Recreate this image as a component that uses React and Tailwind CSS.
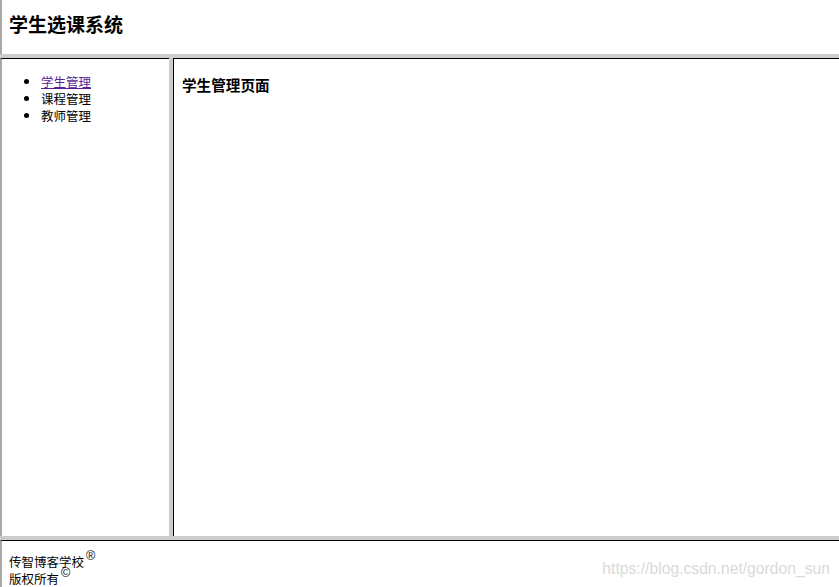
export default function App() {
  const menu = [
    { label: "学生管理", active: true },
    { label: "课程管理" },
    { label: "教师管理" },
  ];

  return (
    <div className="relative w-[839px] h-[587px] overflow-hidden bg-white flex flex-col font-['Noto_Sans_CJK_SC','Noto_Sans',sans-serif] text-black">
      {/* top frame */}
      <div className="h-[54px] border-l-2 border-[#a8a8a8] pl-[7px] pt-[12px]">
        <h3 className="text-[19px] leading-[24px] font-bold">学生选课系统</h3>
      </div>
      <div className="h-[4px] bg-[#cdcdcd]" />

      {/* middle frames */}
      <div className="flex h-[480px]">
        <div className="w-[169px] border-l-2 border-t border-[#a8a8a8] border-t-black pt-[14px]">
          <ul className="flex flex-col">
            {menu.map((item) => (
              <li key={item.label} className="flex items-center h-[17px] text-[12.5px] leading-[17px]">
                <span className="ml-[22px] w-[5px] h-[5px] rounded-full bg-black" />
                <span className="ml-[12px]">
                  {item.active ? (
                    <a href="#" className="text-[#5a1e96] underline">{item.label}</a>
                  ) : (
                    item.label
                  )}
                </span>
              </li>
            ))}
          </ul>
        </div>
        <div className="w-[4px] bg-[#cdcdcd]" />
        <div className="flex-1 border-l border-t border-black pl-[8px] pt-[16px]">
          <h4 className="text-[14.6px] leading-[20px] font-bold">学生管理页面</h4>
        </div>
      </div>

      <div className="h-[4px] bg-[#cdcdcd]" />

      {/* bottom frame */}
      <div className="flex-1 border-l-2 border-t border-[#a8a8a8] border-t-black pl-[7px] pt-[12px] text-[12.5px] leading-[17px]">
        <div className="flex items-start h-[17px]">
          <span>传智博客学校</span>
          <span className="inline-block ml-[2px] text-[12.5px] leading-[12px] font-['Liberation_Sans',Arial,sans-serif] relative -top-[3px]">®</span>
        </div>
        <div className="flex items-start h-[17px]">
          <span>版权所有</span>
          <span className="inline-block ml-[2px] text-[12.5px] leading-[12px] font-['Liberation_Sans',Arial,sans-serif] relative -top-[3px]">©</span>
        </div>
      </div>

      <span className="absolute right-[9px] top-[558px] text-[15.7px] leading-[22px] text-[#dadada] font-['Liberation_Sans',Arial,sans-serif]">
        https://blog.csdn.net/gordon_sun
      </span>
    </div>
  );
}
